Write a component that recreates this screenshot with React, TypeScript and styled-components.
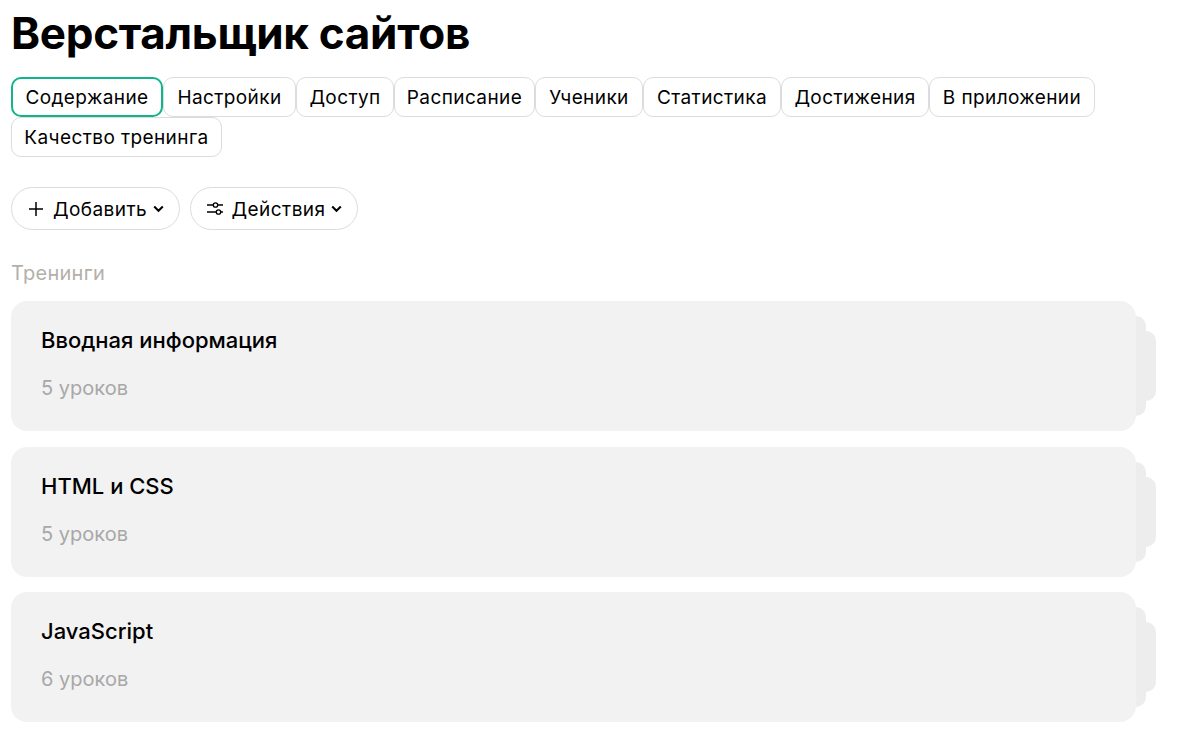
import React from "react";
import styled, { createGlobalStyle } from "styled-components";

const Global = createGlobalStyle`
  html, body { margin: 0; padding: 0; background: #fff; }
  body { font-family: Inter, "Noto Sans", sans-serif; color: #000; }
`;

const Page = styled.div`
  width: 1190px;
  height: 732px;
  overflow: hidden;
  box-sizing: border-box;
  padding: 0 0 0 11px;
`;

const Title = styled.h1`
  margin: 0;
  height: 77px;
  padding-top: 5px;
  box-sizing: border-box;
  font-size: 44px;
  line-height: 56px;
  font-weight: 700;
  letter-spacing: -0.3px;
`;

const Tabs = styled.div`
  display: flex;
  flex-wrap: wrap;
  width: 1100px;
`;

const Tab = styled.div<{ $w: number; $active?: boolean }>`
  width: ${(p) => p.$w}px;
  height: 40px;
  box-sizing: border-box;
  display: flex;
  align-items: center;
  justify-content: center;
  border: ${(p) => (p.$active ? "2px solid #10b48a" : "1px solid #dcdcdc")};
  border-radius: 10px;
  font-size: 19px;
  letter-spacing: 0.4px;
  white-space: nowrap;
`;

const Actions = styled.div`
  display: flex;
  gap: 10px;
  margin-top: 30px;
`;

const Action = styled.div<{ $w: number }>`
  width: ${(p) => p.$w}px;
  height: 43px;
  box-sizing: border-box;
  border: 1px solid #dcdcdc;
  border-radius: 22px;
  display: flex;
  align-items: center;
  justify-content: center;
  padding-top: 1px;
  font-size: 19px;
  letter-spacing: 0.45px;
`;

const LeadIcon = styled.span`
  display: flex;
  margin-right: 8px;
`;

const TrailIcon = styled.span`
  display: flex;
  margin-left: 6px;
`;

const Section = styled.div`
  margin-top: 30px;
  height: 26px;
  line-height: 26px;
  font-size: 20px;
  letter-spacing: 0.25px;
  color: #b3b0aa;
`;

const List = styled.div`
  display: flex;
  flex-direction: column;
  gap: 15.5px;
  margin-top: 15px;
  width: 1125px;
`;

const Card = styled.div`
  position: relative;
  height: 130px;
  box-sizing: border-box;
  padding: 24px 30px 0;
  background: #f2f2f2;
  border-radius: 16px;
`;

const Layer = styled.div<{ $inset: number; $out: number }>`
  position: absolute;
  z-index: -1;
  top: ${(p) => p.$inset}px;
  bottom: ${(p) => p.$inset}px;
  right: -${(p) => p.$out}px;
  width: 40px;
  background: #ededed;
  border-radius: 0 10px 10px 0;
`;

const CardTitle = styled.div`
  font-size: 22px;
  line-height: 30px;
  font-weight: 500;
`;

const CardSub = styled.div`
  margin-top: 20px;
  font-size: 20px;
  line-height: 26px;
  color: #a8a8a8;
`;

const Stage = styled.div`
  position: relative;
  z-index: 0;
`;

const Plus = () => (
  <svg width="18" height="18" viewBox="0 0 18 18" fill="none" stroke="#000" strokeWidth="1.5">
    <path d="M9 2v14M2 9h14" />
  </svg>
);

const Sliders = () => (
  <svg width="18" height="18" viewBox="0 0 18 18" fill="none" stroke="#000" strokeWidth="1.3">
    <path d="M1 5h6M12 5h5M1 12h9M15 12h2" />
    <circle cx="9.5" cy="5" r="2.2" />
    <circle cx="12.5" cy="12" r="2.2" />
  </svg>
);

const Chevron = () => (
  <svg width="11" height="8" viewBox="0 0 11 8" fill="none" stroke="#000" strokeWidth="2">
    <path d="M1.2 1.5l4.3 4.3 4.3-4.3" />
  </svg>
);

const tabs: [string, number][] = [
  ["Содержание", 152],
  ["Настройки", 133],
  ["Доступ", 98],
  ["Расписание", 141],
  ["Ученики", 108],
  ["Статистика", 138],
  ["Достижения", 148],
  ["В приложении", 166],
  ["Качество тренинга", 211],
];

const courses = [
  ["Вводная информация", "5 уроков"],
  ["HTML и CSS", "5 уроков"],
  ["JavaScript", "6 уроков"],
];

export default function App() {
  return (
    <Page>
      <Global />
      <Title>Верстальщик сайтов</Title>
      <Tabs>
        {tabs.map(([t, w], i) => (
          <Tab key={t} $w={w} $active={i === 0}>
            {t}
          </Tab>
        ))}
      </Tabs>
      <Actions>
        <Action $w={169}>
          <LeadIcon>
            <Plus />
          </LeadIcon>
          Добавить
          <TrailIcon>
            <Chevron />
          </TrailIcon>
        </Action>
        <Action $w={168}>
          <LeadIcon>
            <Sliders />
          </LeadIcon>
          Действия
          <TrailIcon>
            <Chevron />
          </TrailIcon>
        </Action>
      </Actions>
      <Section>Тренинги</Section>
      <Stage>
        <List>
          {courses.map(([t, s]) => (
            <Card key={t}>
              <Layer $inset={15} $out={10} />
              <Layer $inset={30} $out={20} />
              <CardTitle>{t}</CardTitle>
              <CardSub>{s}</CardSub>
            </Card>
          ))}
        </List>
      </Stage>
    </Page>
  );
}
